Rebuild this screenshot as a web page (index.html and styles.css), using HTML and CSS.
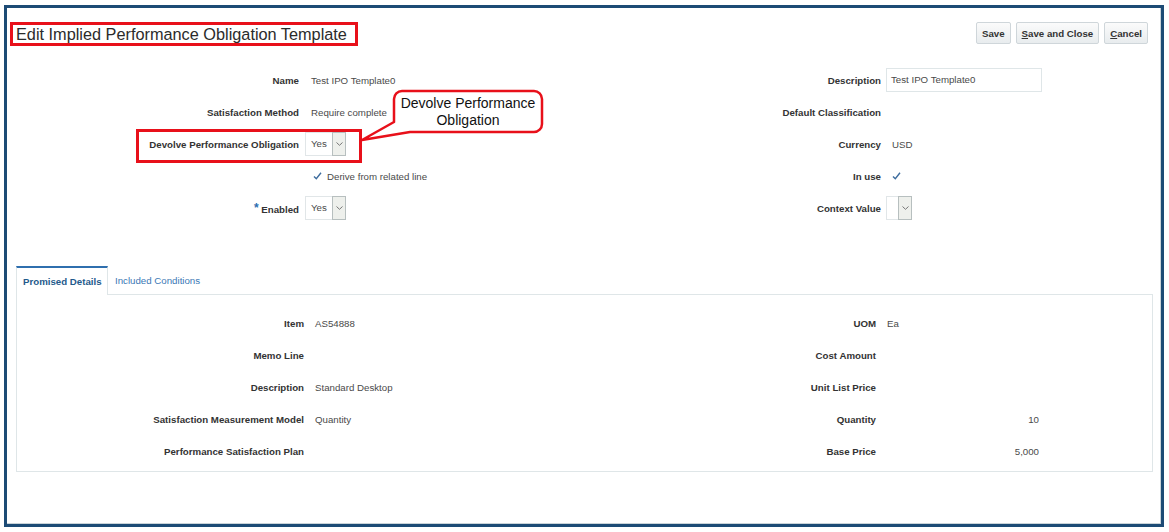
FILE: index.html
```html
<!DOCTYPE html>
<html lang="en">
<head>
    <title>Edit Implied Performance Obligation Template</title>
    <meta charset="utf-8">
    <link rel="stylesheet" href="styles.css">
</head>
<body>
    <div class="frame">
        <header class="page-header">
            <h1 class="page-title">Edit Implied Performance Obligation Template</h1>
            <div class="actions">
                <button class="btn">Save</button>
                <button class="btn"><u>S</u>ave and Close</button>
                <button class="btn"><u>C</u>ancel</button>
            </div>
        </header>

        <section class="form">
            <div class="grid grid-left">
                <span class="lbl">Name</span>
                <span class="val">Test IPO Template0</span>

                <span class="lbl">Satisfaction Method</span>
                <span class="val">Require complete</span>

                <span class="lbl">Devolve Performance Obligation</span>
                <span class="field">
                    <span class="select"><span class="select-txt">Yes</span><span class="select-btn"><svg width="7" height="4" viewBox="0 0 7 4"><path d="M0.5 0.5 L3.5 3.3 L6.5 0.5" fill="none" stroke="#777" stroke-width="1"/></svg></span></span>
                </span>

                <span class="lbl"></span>
                <span class="field check-row">
                    <svg class="check" width="9" height="8" viewBox="0 0 9 8"><path d="M1 4.5 L3.3 6.8 L8 0.8" fill="none" stroke="#3d6c9e" stroke-width="1.4"/></svg>
                    <span class="check-txt">Derive from related line</span>
                </span>

                <span class="lbl"><span class="req">*</span> Enabled</span>
                <span class="field">
                    <span class="select"><span class="select-txt">Yes</span><span class="select-btn"><svg width="7" height="4" viewBox="0 0 7 4"><path d="M0.5 0.5 L3.5 3.3 L6.5 0.5" fill="none" stroke="#777" stroke-width="1"/></svg></span></span>
                </span>
            </div>

            <div class="grid grid-right">
                <span class="lbl">Description</span>
                <span class="field"><span class="input">Test IPO Template0</span></span>

                <span class="lbl">Default Classification</span>
                <span class="val"></span>

                <span class="lbl">Currency</span>
                <span class="val">USD</span>

                <span class="lbl">In use</span>
                <span class="val"><svg class="check" width="9" height="8" viewBox="0 0 9 8"><path d="M1 4.5 L3.3 6.8 L8 0.8" fill="none" stroke="#3d6c9e" stroke-width="1.4"/></svg></span>

                <span class="lbl">Context Value</span>
                <span class="field">
                    <span class="select"><span class="select-txt empty"></span><span class="select-btn"><svg width="7" height="4" viewBox="0 0 7 4"><path d="M0.5 0.5 L3.5 3.3 L6.5 0.5" fill="none" stroke="#777" stroke-width="1"/></svg></span></span>
                </span>
            </div>
        </section>

        <section class="tabs">
            <div class="tab-strip">
                <span class="tab active">Promised Details</span>
                <span class="tab">Included Conditions</span>
            </div>
            <div class="tab-panel">
                <div class="grid panel-left">
                    <span class="lbl">Item</span>
                    <span class="pval">AS54888</span>
                    <span class="lbl">Memo Line</span>
                    <span class="pval"></span>
                    <span class="lbl">Description</span>
                    <span class="pval">Standard Desktop</span>
                    <span class="lbl">Satisfaction Measurement Model</span>
                    <span class="pval">Quantity</span>
                    <span class="lbl">Performance Satisfaction Plan</span>
                    <span class="pval"></span>
                </div>
                <div class="grid panel-right">
                    <span class="lbl">UOM</span>
                    <span class="pval">Ea</span>
                    <span class="lbl">Cost Amount</span>
                    <span class="pval"></span>
                    <span class="lbl">Unit List Price</span>
                    <span class="pval"></span>
                    <span class="lbl">Quantity</span>
                    <span class="pval num">10</span>
                    <span class="lbl">Base Price</span>
                    <span class="pval num">5,000</span>
                </div>
            </div>
        </section>

        <!-- annotation overlays -->
        <div class="highlight-box"></div>
        <svg class="callout-shape" width="192" height="80" viewBox="0 0 192 80">
            <path d="M47 3 H179 A8 8 0 0 1 187 11 V36 A8 8 0 0 1 179 44 H55 L7 52 L39 34 V11 A8 8 0 0 1 47 3 Z" fill="#fff" stroke="#e8101a" stroke-width="2.5" stroke-linejoin="round"/>
        </svg>
        <div class="callout-text">Devolve Performance<br>Obligation</div>
    </div>
</body>
</html>
```

FILE: styles.css
```css
:root {
    --frame-color: #1d4b75;
    --text-color: #333;
    --value-color: #4a4a4a;
    --border-light: #dfe6e8;
    --accent-color: #1f5a8c;
    --link-color: #3b78b5;
    --annot-red: #e8101a;
}

* {
    margin: 0;
    padding: 0;
    box-sizing: border-box;
}

body {
    font-family: "Liberation Sans", Arial, sans-serif;
    font-size: 9.7px;
    color: var(--text-color);
    background: #fff;
}

.frame {
    position: relative;
    margin: 5px 0 0 4px;
    width: 1160px;
    height: 522px;
    border: 3px solid var(--frame-color);
    box-shadow: inset -1px -1px 0 #c9d3d8;
}

.page-header {
    display: flex;
    justify-content: space-between;
    align-items: flex-start;
    padding: 14px 13px 0 3px;
}

.page-title {
    font-size: 16.3px;
    font-weight: normal;
    line-height: 18px;
    color: #2b2b2b;
    border: 3px solid var(--annot-red);
    padding: 0 8px 0 3px;
}

.actions {
    display: flex;
    gap: 5px;
}

.btn {
    font-family: inherit;
    font-size: 9.7px;
    font-weight: bold;
    color: #333;
    height: 22px;
    padding: 0 5px;
    border: 1px solid #cfd6da;
    border-radius: 2px;
    background: linear-gradient(#fbfbfb, #e8ecee);
}

.form {
    display: flex;
    margin-top: 18px;
}

.grid {
    display: grid;
    grid-auto-rows: 32px;
    align-items: center;
}

.grid-left {
    width: 600px;
    grid-template-columns: 292px 200px;
    column-gap: 6px;
}

.grid-right {
    grid-template-columns: 274px 200px;
    column-gap: 5px;
}

.lbl {
    text-align: right;
    font-weight: bold;
    color: var(--text-color);
    white-space: nowrap;
}

.req {
    color: #2a6db0;
    font-size: 12px;
    vertical-align: 1px;
}

.val {
    padding-left: 6px;
    color: var(--value-color);
    white-space: nowrap;
}

.field {
    display: flex;
    align-items: center;
}

.select {
    display: inline-flex;
    height: 24px;
    border: 1px solid #e1e6e8;
    background: #fff;
}

.select-txt {
    width: 26px;
    padding-left: 5px;
    line-height: 22px;
    color: var(--value-color);
}

.select-txt.empty {
    width: 11px;
}

.select-btn {
    display: flex;
    align-items: center;
    justify-content: center;
    width: 14px;
    background: #eef0ec;
    border: 1px solid #b7bfbf;
    margin: -1px -1px -1px 0;
}

.check-row {
    padding-left: 8px;
    gap: 5px;
}

.check-txt {
    color: var(--value-color);
}

.input {
    display: block;
    width: 156px;
    height: 24px;
    line-height: 22px;
    padding-left: 4px;
    border: 1px solid var(--border-light);
    color: var(--value-color);
}

.tabs {
    margin: 42px 8px 0 9px;
}

.tab-strip {
    display: flex;
    height: 28px;
}

.tab {
    display: flex;
    align-items: center;
    padding: 0 7px;
    white-space: nowrap;
    color: var(--link-color);
}

.tab.active {
    width: 92px;
    padding-left: 6px;
    font-weight: bold;
    color: var(--accent-color);
    background: #fff;
    border-top: 2px solid #2f6fae;
    border-left: 1px solid var(--border-light);
    border-right: 1px solid var(--border-light);
    margin-bottom: -1px;
    position: relative;
    z-index: 1;
}

.tab-panel {
    display: flex;
    height: 178px;
    padding-top: 12px;
    border: 1px solid var(--border-light);
}

.panel-left {
    width: 583px;
    grid-template-columns: 287px 200px;
    column-gap: 11px;
}

.panel-right {
    grid-template-columns: 276px 152px;
    column-gap: 11px;
}

.pval {
    color: var(--value-color);
    white-space: nowrap;
}

.pval.num {
    text-align: right;
}

.highlight-box {
    position: absolute;
    left: 129px;
    top: 121px;
    width: 226px;
    height: 34px;
    border: 3px solid var(--annot-red);
}

.callout-shape {
    position: absolute;
    left: 348px;
    top: 80px;
}

.callout-text {
    position: absolute;
    left: 387px;
    top: 83px;
    width: 148px;
    height: 41px;
    display: flex;
    align-items: center;
    justify-content: center;
    text-align: center;
    font-size: 14px;
    line-height: 17px;
    color: #111;
}
```
